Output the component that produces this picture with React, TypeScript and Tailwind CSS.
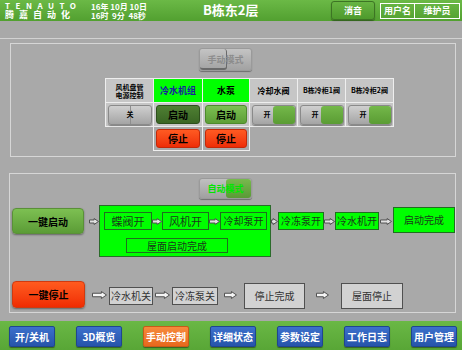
import React from "react";

function Arrow({ w = 12, h = 7, fill = "#e0e0e0" }: { w?: number; h?: number; fill?: string }) {
  const hw = w - h * 0.7;
  return (
    <svg width={w} height={h} viewBox={`0 0 ${w} ${h}`} className="block shrink-0">
      <polygon
        points={`0.5,${h * 0.28} ${hw},${h * 0.28} ${hw},0.5 ${w - 0.5},${h / 2} ${hw},${h - 0.5} ${hw},${h * 0.72} 0.5,${h * 0.72}`}
        fill={fill}
        stroke="#505050"
        strokeWidth="1"
      />
    </svg>
  );
}

function GreenBox({ className, children }: { className: string; children: React.ReactNode }) {
  return (
    <div
      className={`shrink-0 flex items-center justify-center whitespace-nowrap bg-[#00ff00] border border-[#1f6f1f] text-[#1a3a1a] leading-none ${className}`}
    >
      {children}
    </div>
  );
}

function GrayBox({ className, children }: { className: string; children: React.ReactNode }) {
  return (
    <div
      className={`shrink-0 flex items-center justify-center whitespace-nowrap bg-[#d2d2d2] border border-[#505050] text-[#333] leading-none ${className}`}
    >
      {children}
    </div>
  );
}

function Toggle({ on }: { on: boolean }) {
  return (
    <div className="relative mx-auto mt-[2px] w-[44px] h-[20px] rounded-[3px] bg-linear-to-b from-[#d0d0d0] to-[#a4a4a4] border border-[#8a8a8a] shadow-[0_1px_1px_rgba(0,0,0,0.35)]">
      {on ? (
        <div className="absolute right-0 top-0 w-[22px] h-[18px] rounded-[3px] bg-linear-to-b from-[#74b84a] to-[#5a9c33]" />
      ) : (
        <div className="absolute left-[21px] top-0 w-px h-[18px] bg-[#8e8e8e]" />
      )}
      <span
        className={`absolute top-[5px] text-[7px] font-bold leading-none text-black ${on ? "left-[11px]" : "left-[18px]"}`}
      >
        {on ? "开" : "关"}
      </span>
    </div>
  );
}

const navItems = ["开/关机", "3D概览", "手动控制", "详细状态", "参数设定", "工作日志", "用户管理"];

export default function App() {
  return (
    <div className="w-[462px] h-[350px] bg-[#a9a9a9] flex flex-col overflow-hidden font-['Noto_Sans_CJK_SC',sans-serif]">
      {/* header */}
      <div className="h-[21px] shrink-0 flex items-start whitespace-nowrap bg-linear-to-b from-[#6bb946] to-[#52a030] text-white">
        <div className="ml-[5px] mt-[1px] w-[70px] shrink-0 flex flex-col leading-none">
          <span className="text-[8px] font-bold tracking-[5.5px] leading-[9px]">TENAUTO</span>
          <span className="text-[9px] font-bold tracking-[5px] leading-[10px]">腾嘉自动化</span>
        </div>
        <div className="ml-[16px] mt-[2px] w-[70px] shrink-0 flex flex-col text-[8px] font-bold leading-[9px]">
          <span>16年&nbsp;10月&nbsp;10日</span>
          <span>16时&nbsp; 9分&nbsp; 48秒</span>
        </div>
        <div className="ml-[42px] mt-[3px] w-[70px] shrink-0 text-[13px] font-bold leading-none">B栋东2层</div>
        <div className="ml-[58px] mt-[1px] w-[44px] h-[19px] shrink-0 flex items-center justify-center rounded-[3px] border border-[#3d7424] bg-linear-to-b from-[#67b442] to-[#4e9a2c] shadow-[0_1px_1px_rgba(0,0,0,0.4)] text-[9px] font-bold">
          消音
        </div>
        <div className="ml-[5px] mt-[3px] h-[16px] shrink-0 flex border border-white text-[9px] font-bold">
          <div className="w-[34px] flex items-center justify-center border-r border-white">用户名</div>
          <div className="w-[44px] flex items-center justify-center">维护员</div>
        </div>
      </div>

      <div className="mt-[17px] h-px bg-[#d2d2d2]" />

      {/* manual panel */}
      <div className="mt-[4px] ml-[10px] w-[446px] h-[114px] border border-[#d6d6d6] flex flex-col items-start">
        <div className="ml-[188px] mt-[4px] w-[53px] h-[23px] relative rounded-[3px] bg-linear-to-b from-[#c4c4c4] to-[#a2a2a2] border border-[#9a9a9a] shadow-[0_1px_1px_rgba(0,0,0,0.35)]">
          <div className="absolute left-0 top-0 w-[27px] h-[21px] rounded-[3px] border-b-2 border-r border-[#6a6a6a]" />
          <span className="absolute inset-0 flex items-center justify-center text-[9px] font-bold text-[#8c8c8c]">
            手动模式
          </span>
        </div>

        <div className="ml-[94px] mt-[7px] grid grid-cols-[48px_49px_47px_48px_48px_48px] grid-rows-[24px_24px] border-l border-t border-[#eeeeee] whitespace-nowrap">
          <div className="bg-[#c6c6c6] border-r border-b border-[#eeeeee] flex items-center justify-center text-center text-[7px] font-bold leading-[8px] text-black">
            风机盘管
            <br />
            电源控制
          </div>
          <div className="bg-[#00ff00] border-r border-b border-[#eeeeee] flex items-center justify-center text-[9px] font-bold text-[#1a1aa0]">
            冷水机组
          </div>
          <div className="bg-[#00ff00] border-r border-b border-[#eeeeee] flex items-center justify-center text-[9px] font-bold text-black">
            水泵
          </div>
          <div className="bg-[#c6c6c6] border-r border-b border-[#eeeeee] flex items-center justify-center text-[8px] font-bold text-black">
            冷却水阀
          </div>
          <div className="bg-[#c6c6c6] border-r border-b border-[#eeeeee] flex items-center justify-center text-[7px] font-bold text-black">
            B栋冷柜1阀
          </div>
          <div className="bg-[#c6c6c6] border-r border-b border-[#eeeeee] flex items-center justify-center text-[7px] font-bold text-black">
            B栋冷柜2阀
          </div>

          <div className="bg-[#c6c6c6] border-r border-b border-[#eeeeee]">
            <Toggle on={false} />
          </div>
          <div className="bg-[#c6c6c6] border-r border-b border-[#eeeeee] p-[2px]">
            <div className="h-full rounded-[3px] bg-linear-to-b from-[#4f7f33] to-[#3a6624] border border-[#2d4f1c] flex items-center justify-center text-[10px] font-bold text-black">
              启动
            </div>
          </div>
          <div className="bg-[#c6c6c6] border-r border-b border-[#eeeeee] p-[2px]">
            <div className="h-full rounded-[3px] bg-linear-to-b from-[#7cc052] to-[#5d9e37] border border-[#4d8a2c] flex items-center justify-center text-[10px] font-bold text-black">
              启动
            </div>
          </div>
          <div className="bg-[#c6c6c6] border-r border-b border-[#eeeeee]">
            <Toggle on />
          </div>
          <div className="bg-[#c6c6c6] border-r border-b border-[#eeeeee]">
            <Toggle on />
          </div>
          <div className="bg-[#c6c6c6] border-r border-b border-[#eeeeee]">
            <Toggle on />
          </div>
        </div>

        <div className="ml-[142px] flex border-l border-[#eeeeee]">
          {[0, 1].map((i) => (
            <div key={i} className={`${i === 0 ? "w-[49px]" : "w-[47px]"} h-[24px] p-[2px] border-r border-b border-[#eeeeee]`}>
              <div className="h-full rounded-[3px] bg-linear-to-b from-[#ff5a22] to-[#ee2c06] border border-[#c42808] flex items-center justify-center text-[10px] font-bold text-black">
                停止
              </div>
            </div>
          ))}
        </div>
      </div>

      {/* auto panel */}
      <div className="mt-[16px] ml-[9px] w-[447px] h-[140px] border border-[#d6d6d6] flex flex-col items-start">
        <div className="ml-[189px] mt-[4px] w-[53px] h-[21px] relative rounded-[3px] bg-linear-to-b from-[#c0c0c0] to-[#a0a0a0] border border-[#9a9a9a] shadow-[0_1px_1px_rgba(0,0,0,0.35)]">
          <div className="absolute right-0 top-0 w-[25px] h-[19px] rounded-[3px] bg-linear-to-b from-[#78b94e] to-[#5a9a36]" />
          <span className="absolute inset-0 flex items-center justify-center text-[9px] font-bold text-[#00e600]">
            自动模式
          </span>
        </div>

        {/* start flow */}
        <div className="mt-[6px] flex items-start">
          <div className="ml-[2px] mt-[3px] w-[72px] h-[26px] rounded-[4px] bg-linear-to-b from-[#7dc052] to-[#5b9c36] border border-[#5a9038] shadow-[0_1px_2px_rgba(0,0,0,0.4)] flex items-center justify-center text-[10px] font-bold text-black">
            一键启动
          </div>
          <div className="ml-[5px] mt-[13px]">
            <Arrow w={10} h={7} />
          </div>
          <div className="w-[172px] h-[52px] bg-[#00ff00] border border-[#2b6b2b] flex flex-col items-start">
            <div className="ml-[4px] mt-[6px] flex items-center">
              <GreenBox className="w-[48px] h-[18px] text-[11px]">蝶阀开</GreenBox>
              <Arrow w={10} h={7} />
              <GreenBox className="w-[47px] h-[18px] text-[11px]">风机开</GreenBox>
              <Arrow w={11} h={7} />
              <GreenBox className="w-[47px] h-[18px] text-[10px]">冷却泵开</GreenBox>
            </div>
            <GreenBox className="ml-[26px] mt-[8px] w-[102px] h-[15px] text-[10px]">屋面启动完成</GreenBox>
          </div>
          <div className="mt-[7px] flex items-center">
            <Arrow w={7} h={7} />
            <GreenBox className="w-[46px] h-[18px] text-[10px]">冷冻泵开</GreenBox>
            <Arrow w={11} h={7} />
            <GreenBox className="w-[44px] h-[18px] text-[10px]">冷水机开</GreenBox>
            <div className="w-[14px] flex justify-center">
              <Arrow w={12} h={7} />
            </div>
          </div>
          <GreenBox className="mt-[2px] w-[62px] h-[26px] text-[10px]">启动完成</GreenBox>
        </div>

        {/* stop flow */}
        <div className="mt-[24px] flex items-start">
          <div className="ml-[2px] w-[73px] h-[27px] rounded-[4px] bg-linear-to-b from-[#ff5a1e] to-[#f02a02] border border-[#d03a10] shadow-[0_1px_2px_rgba(0,0,0,0.4)] flex items-center justify-center text-[10px] font-bold text-black">
            一键停止
          </div>
          <div className="ml-[7px] mt-[10px]">
            <Arrow w={15} h={8} fill="#f4f4f4" />
          </div>
          <GrayBox className="ml-[2px] mt-[6px] w-[44px] h-[18px] text-[10px]">冷水机关</GrayBox>
          <div className="ml-[2px] mt-[10px]">
            <Arrow w={15} h={8} fill="#f4f4f4" />
          </div>
          <GrayBox className="ml-[2px] mt-[6px] w-[46px] h-[18px] text-[10px]">冷冻泵关</GrayBox>
          <div className="ml-[6px] mt-[10px]">
            <Arrow w={13} h={8} fill="#f4f4f4" />
          </div>
          <GrayBox className="ml-[7px] mt-[2px] w-[61px] h-[26px] text-[10px]">停止完成</GrayBox>
          <div className="ml-[11px] mt-[10px]">
            <Arrow w={13} h={8} fill="#f4f4f4" />
          </div>
          <GrayBox className="ml-[12px] mt-[2px] w-[62px] h-[26px] text-[10px]">屋面停止</GrayBox>
        </div>
      </div>

      {/* bottom nav */}
      <div className="mt-[8px] h-[29px] shrink-0 bg-linear-to-b from-[#6ab845] to-[#58a636] flex items-start pt-[5px] pl-[9px] gap-[21px]">
        {navItems.map((label) => (
          <div
            key={label}
            className={`w-[46px] h-[21px] whitespace-nowrap rounded-[2px] flex items-center justify-center text-[10px] font-bold text-white shadow-[0_1px_1px_rgba(0,0,0,0.4)] ${
              label === "手动控制"
                ? "bg-linear-to-b from-[#f68a3c] to-[#e8681c] border border-[#c85a18]"
                : "bg-linear-to-b from-[#3c70cc] to-[#2654aa] border border-[#1f4590]"
            }`}
          >
            {label}
          </div>
        ))}
      </div>
    </div>
  );
}
